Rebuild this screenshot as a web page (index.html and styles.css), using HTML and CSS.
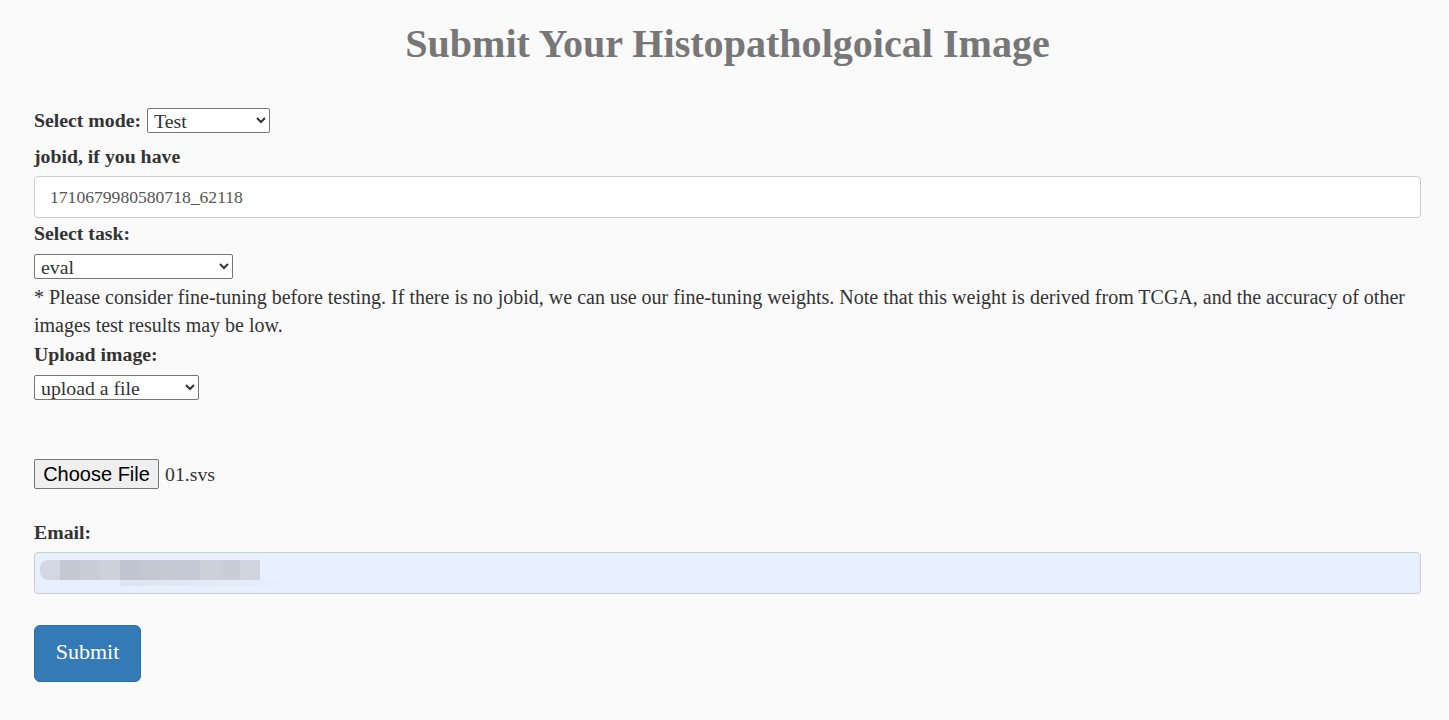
FILE: index.html
```html
<!DOCTYPE html>
<html>
<head>
<meta charset="utf-8">
<link rel="stylesheet" href="styles.css">
</head>
<body>
<div class="page">
  <h1 class="title">Submit Your Histopatholgoical Image</h1>
  <form class="form">
    <div class="row-inline">
      <label class="lbl">Select mode:</label>
      <select class="sel sel-mode"><option>Test</option><option>Train</option></select>
    </div>
    <label class="lbl block lbl-job">jobid, if you have</label>
    <input class="field" type="text" value="1710679980580718_62118">
    <label class="lbl block">Select task:</label>
    <select class="sel sel-task"><option>eval</option></select>
    <p class="note">* Please consider fine-tuning before testing. If there is no jobid, we can use our fine-tuning weights. Note that this weight is derived from TCGA, and the accuracy of other images test results may be low.</p>
    <label class="lbl block">Upload image:</label>
    <select class="sel sel-upload"><option>upload a file</option></select>
    <div class="file-row">
      <button type="button" class="file-btn">Choose File</button>
      <span class="file-name">01.svs</span>
    </div>
    <label class="lbl block email-lbl">Email:</label>
    <div class="field email-field">
      <div class="blur">
        <span class="b b1"></span><span class="b b2"></span><span class="b b3"></span><span class="b b4"></span><span class="b b5"></span><span class="b b6"></span><span class="b b7"></span><span class="b b8"></span><span class="b b9"></span><span class="b b10"></span><span class="b b11"></span>
      </div>
      <div class="blur-low"></div>
    </div>
    <button type="button" class="submit">Submit</button>
  </form>
</div>
</body>
</html>
```

FILE: styles.css
```css
html, body {
  margin: 0;
  padding: 0;
  background: #fafafa;
}
body {
  font-family: "Liberation Serif", "Times New Roman", serif;
  color: #333;
  font-size: 19.8px;
}
.page {
  padding: 0 28px 0 34px;
}
.title {
  margin: 0;
  padding-top: 22px;
  text-align: center;
  font-size: 40.1px;
  font-weight: bold;
  color: #777;
  line-height: 44px;
  height: 44px;
}
.form {
  margin-top: 42px;
  display: flex;
  flex-direction: column;
  align-items: flex-start;
}
.row-inline {
  display: flex;
  align-items: center;
  gap: 6px;
  height: 24px;
}
.lbl {
  font-weight: bold;
  font-size: 19.8px;
  line-height: 26px;
}
.block {
  display: block;
  margin-top: 2px;
}
.lbl-job {
  margin-top: 11px;
}
.sel {
  font-family: "Liberation Serif", "Times New Roman", serif;
  font-size: 19.8px;
  color: #333;
  height: 25px;
  padding: 0 2px;
  border: 1px solid #767676;
  border-radius: 2px;
  background: #fff;
}
.sel-mode { width: 123px; }
.sel-task { width: 199px; margin-top: 8px; }
.sel-upload { width: 165px; margin-top: 8px; }
.field {
  box-sizing: border-box;
  width: 100%;
  height: 42px;
  margin-top: 7px;
  border: 1px solid #ccc;
  border-radius: 4px;
  background: #fff;
  padding: 0 15px;
  font-family: "Liberation Serif", "Times New Roman", serif;
  font-size: 17.6px;
  color: #555;
}
.note {
  margin: 4px 0 0;
  font-size: 20px;
  line-height: 28px;
}
.file-row {
  margin-top: 59px;
  display: flex;
  align-items: center;
  gap: 6px;
}
.file-btn {
  font-family: "Liberation Sans", Arial, sans-serif;
  font-size: 20px;
  color: #000;
  background: #efefef;
  border: 1px solid #767676;
  border-radius: 2px;
  height: 30px;
  width: 125px;
  padding: 0;
}
.file-name {
  font-size: 19.8px;
  color: #333;
}
.email-lbl {
  margin-top: 30px;
}
.email-field {
  background: #e8f0fe;
  padding: 7px 5px;
  display: flex;
  flex-direction: column;
}
.blur {
  display: flex;
  height: 20px;
}
.b { width: 20px; height: 20px; display: block; }
.b1 { background: #d2d8e3; border-radius: 8px 0 0 8px; }
.b2 { background: #c3c8d3; }
.b3 { background: #c8cdd8; }
.b4 { background: #cdd2dd; }
.b5 { background: #c1c5d1; }
.b6 { background: #c3c7d2; }
.b7 { background: #c4c9d4; }
.b8 { background: #c4c9d5; }
.b9 { background: #cbd0db; }
.b10 { background: #c8cdd8; }
.b11 { background: #cfd4df; }
.blur-low {
  margin-left: 80px;
  width: 170px;
  height: 9px;
  background: linear-gradient(90deg, #dde3ef, #e4ebf7 60%, #e8effc);
}
.submit {
  margin-top: 31px;
  width: 107px;
  height: 57px;
  background: #337ab7;
  border: 1px solid #2e6da4;
  border-radius: 6px;
  color: #fff;
  font-family: "Liberation Serif", "Times New Roman", serif;
  font-size: 22px;
  padding: 0 0 3px;
}
```
